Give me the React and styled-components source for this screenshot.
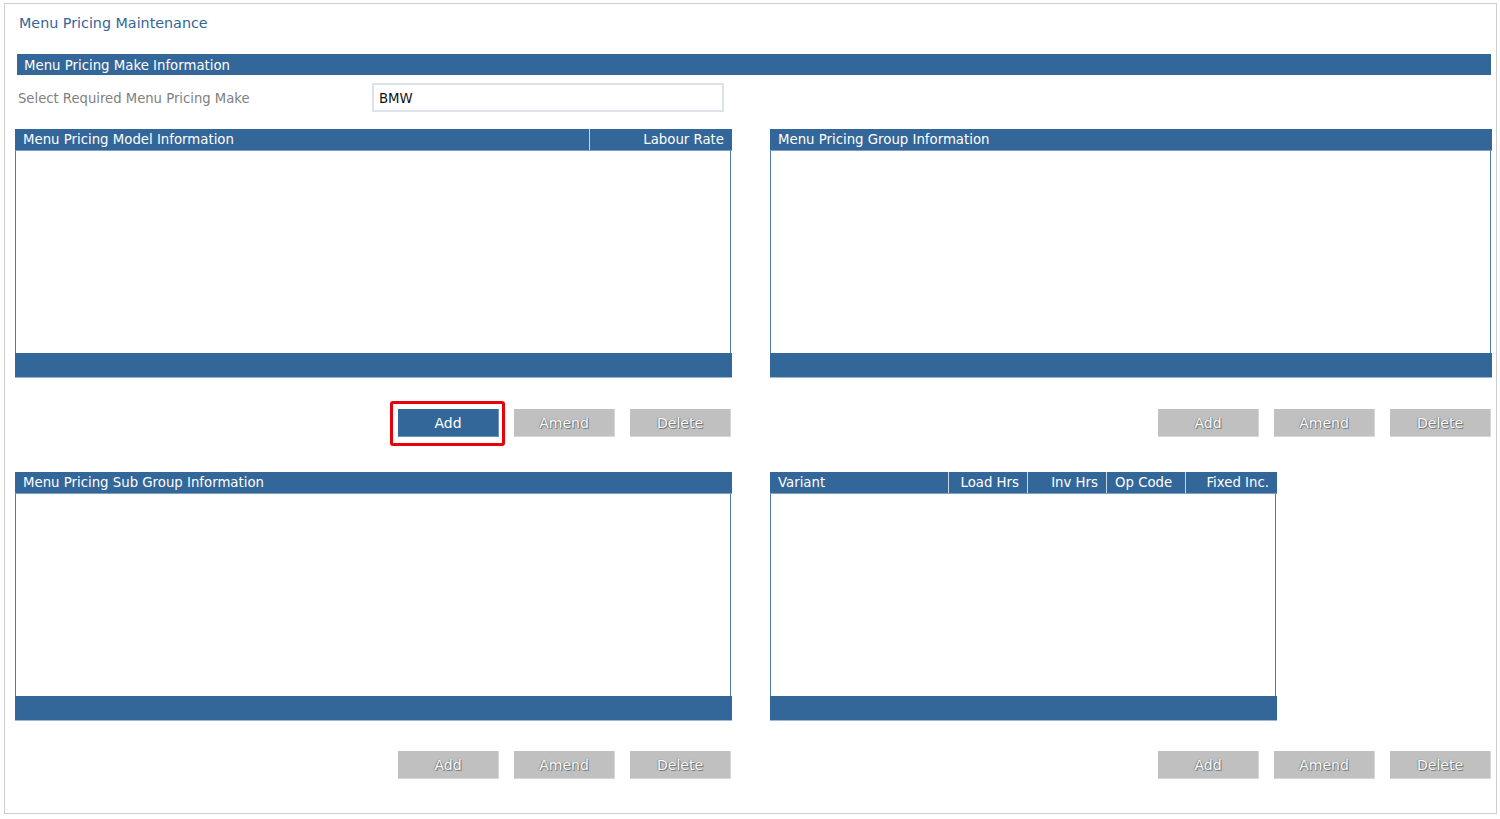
import React from 'react';
import styled, { createGlobalStyle } from 'styled-components';

const GlobalStyle = createGlobalStyle`
  body {
    margin: 0;
    background: #ffffff;
    font-family: 'DejaVu Sans', 'Liberation Sans', sans-serif;
  }
  * {
    box-sizing: border-box;
  }
`;

const Frame = styled.div`
  margin: 3px 3px 0 4px;
  height: 811px;
  border: 1px solid #cfcfcf;
  padding: 0 3px 0 10px;
  display: flex;
  flex-direction: column;
`;

const Title = styled.div`
  padding: 9px 0 0 4px;
  line-height: 20px;
  font-size: 14.3px;
  color: #336699;
`;

const MakeBar = styled.div`
  margin: 21px 2px 0 2px;
  height: 21px;
  line-height: 23px;
  padding-left: 7px;
  background: #336699;
  color: #ffffff;
  font-size: 13.3px;
`;

const MakeRow = styled.div`
  margin-top: 8px;
  display: flex;
  align-items: center;
  height: 29px;
`;

const Label = styled.div`
  width: 357px;
  padding: 2px 0 0 3px;
  font-size: 13.2px;
  color: #808080;
`;

const MakeInput = styled.input`
  width: 352px;
  height: 29px;
  border: 2px solid #dde2ea;
  padding: 2px 0 0 5px;
  font: inherit;
  font-size: 13.3px;
  color: #111111;
  outline: none;
`;

const Grid = styled.div`
  margin-top: ${(p) => p.$top}px;
  display: grid;
  grid-template-columns: 717px 722px;
  column-gap: 38px;
`;

const Column = styled.div`
  display: flex;
  flex-direction: column;
`;

const Panel = styled.div`
  width: ${(p) => p.$width || '100%'};
  height: 249px;
  display: flex;
  flex-direction: column;
`;

const Header = styled.div`
  height: 22px;
  display: flex;
  background: #336699;
  border-bottom: 1px solid #7f9fc2;
  color: #ffffff;
  font-size: 13.3px;
  line-height: 22px;
`;

const HeadCell = styled.div`
  flex: ${(p) => (p.$width ? `0 0 ${p.$width}px` : '1 1 auto')};
  padding: 0 8px;
  text-align: ${(p) => p.$align || 'left'};
  white-space: nowrap;
  & + & {
    border-left: 1px solid #c9d6e6;
  }
`;

const Body = styled.div`
  flex: 1;
  margin: 0 1px 0 0;
  background: #ffffff;
  border-left: 1px solid #4d7aaa;
  border-right: 1px solid #4d7aaa;
`;

const Footer = styled.div`
  height: 25px;
  background: #336699;
  border-bottom: 1px solid #9fb6d2;
`;

const ButtonRow = styled.div`
  margin-top: ${(p) => p.$top || 31}px;
  padding-right: 1px;
  display: flex;
  justify-content: flex-end;
  gap: 15px;
`;

const Button = styled.button`
  position: relative;
  width: 101px;
  height: 28px;
  border: none;
  font-family: inherit;
  font-size: 14px;
  padding: 0;
  background: ${(p) => (p.disabled ? '#c0c0c0' : '#336699')};
  color: #ffffff;
  text-shadow: ${(p) =>
    p.disabled ? '0 0 1px #5e5e5e, 1px 1px 0 #7c7c7c, -1px 0 0 #a0a0a0' : 'none'};
  border-right: 1px solid ${(p) => (p.disabled ? '#d6d6d6' : '#6f93bb')};
  border-bottom: 1px solid ${(p) => (p.disabled ? '#d6d6d6' : '#6f93bb')};

  ${(p) =>
    p.$highlight &&
    `
    &::after {
      content: '';
      position: absolute;
      top: -8px;
      left: -8px;
      right: -7px;
      bottom: -10px;
      border: 3px solid #e8000b;
      border-radius: 3px;
    }
  `}
`;

function Buttons({ active, highlight, top }) {
  return (
    <ButtonRow $top={top}>
      <Button disabled={!active} $highlight={highlight}>
        Add
      </Button>
      <Button disabled>Amend</Button>
      <Button disabled>Delete</Button>
    </ButtonRow>
  );
}

export default function App() {
  return (
    <>
      <GlobalStyle />
      <Frame>
        <Title>Menu Pricing Maintenance</Title>
        <MakeBar>Menu Pricing Make Information</MakeBar>
        <MakeRow>
          <Label>Select Required Menu Pricing Make</Label>
          <MakeInput defaultValue="BMW" />
        </MakeRow>

        <Grid $top={17}>
          <Column>
            <Panel>
              <Header>
                <HeadCell>Menu Pricing Model Information</HeadCell>
                <HeadCell $width={143} $align="right">
                  Labour Rate
                </HeadCell>
              </Header>
              <Body />
              <Footer />
            </Panel>
            <Buttons active highlight />
          </Column>
          <Column>
            <Panel>
              <Header>
                <HeadCell>Menu Pricing Group Information</HeadCell>
              </Header>
              <Body />
              <Footer />
            </Panel>
            <Buttons />
          </Column>
        </Grid>

        <Grid $top={35}>
          <Column>
            <Panel>
              <Header>
                <HeadCell>Menu Pricing Sub Group Information</HeadCell>
              </Header>
              <Body />
              <Footer />
            </Panel>
            <Buttons top={30} />
          </Column>
          <Column>
            <Panel $width="507px">
              <Header>
                <HeadCell>Variant</HeadCell>
                <HeadCell $width={79} $align="right">
                  Load Hrs
                </HeadCell>
                <HeadCell $width={79} $align="right">
                  Inv Hrs
                </HeadCell>
                <HeadCell $width={79}>Op Code</HeadCell>
                <HeadCell $width={92} $align="right">
                  Fixed Inc.
                </HeadCell>
              </Header>
              <Body />
              <Footer />
            </Panel>
            <Buttons top={30} />
          </Column>
        </Grid>
      </Frame>
    </>
  );
}
